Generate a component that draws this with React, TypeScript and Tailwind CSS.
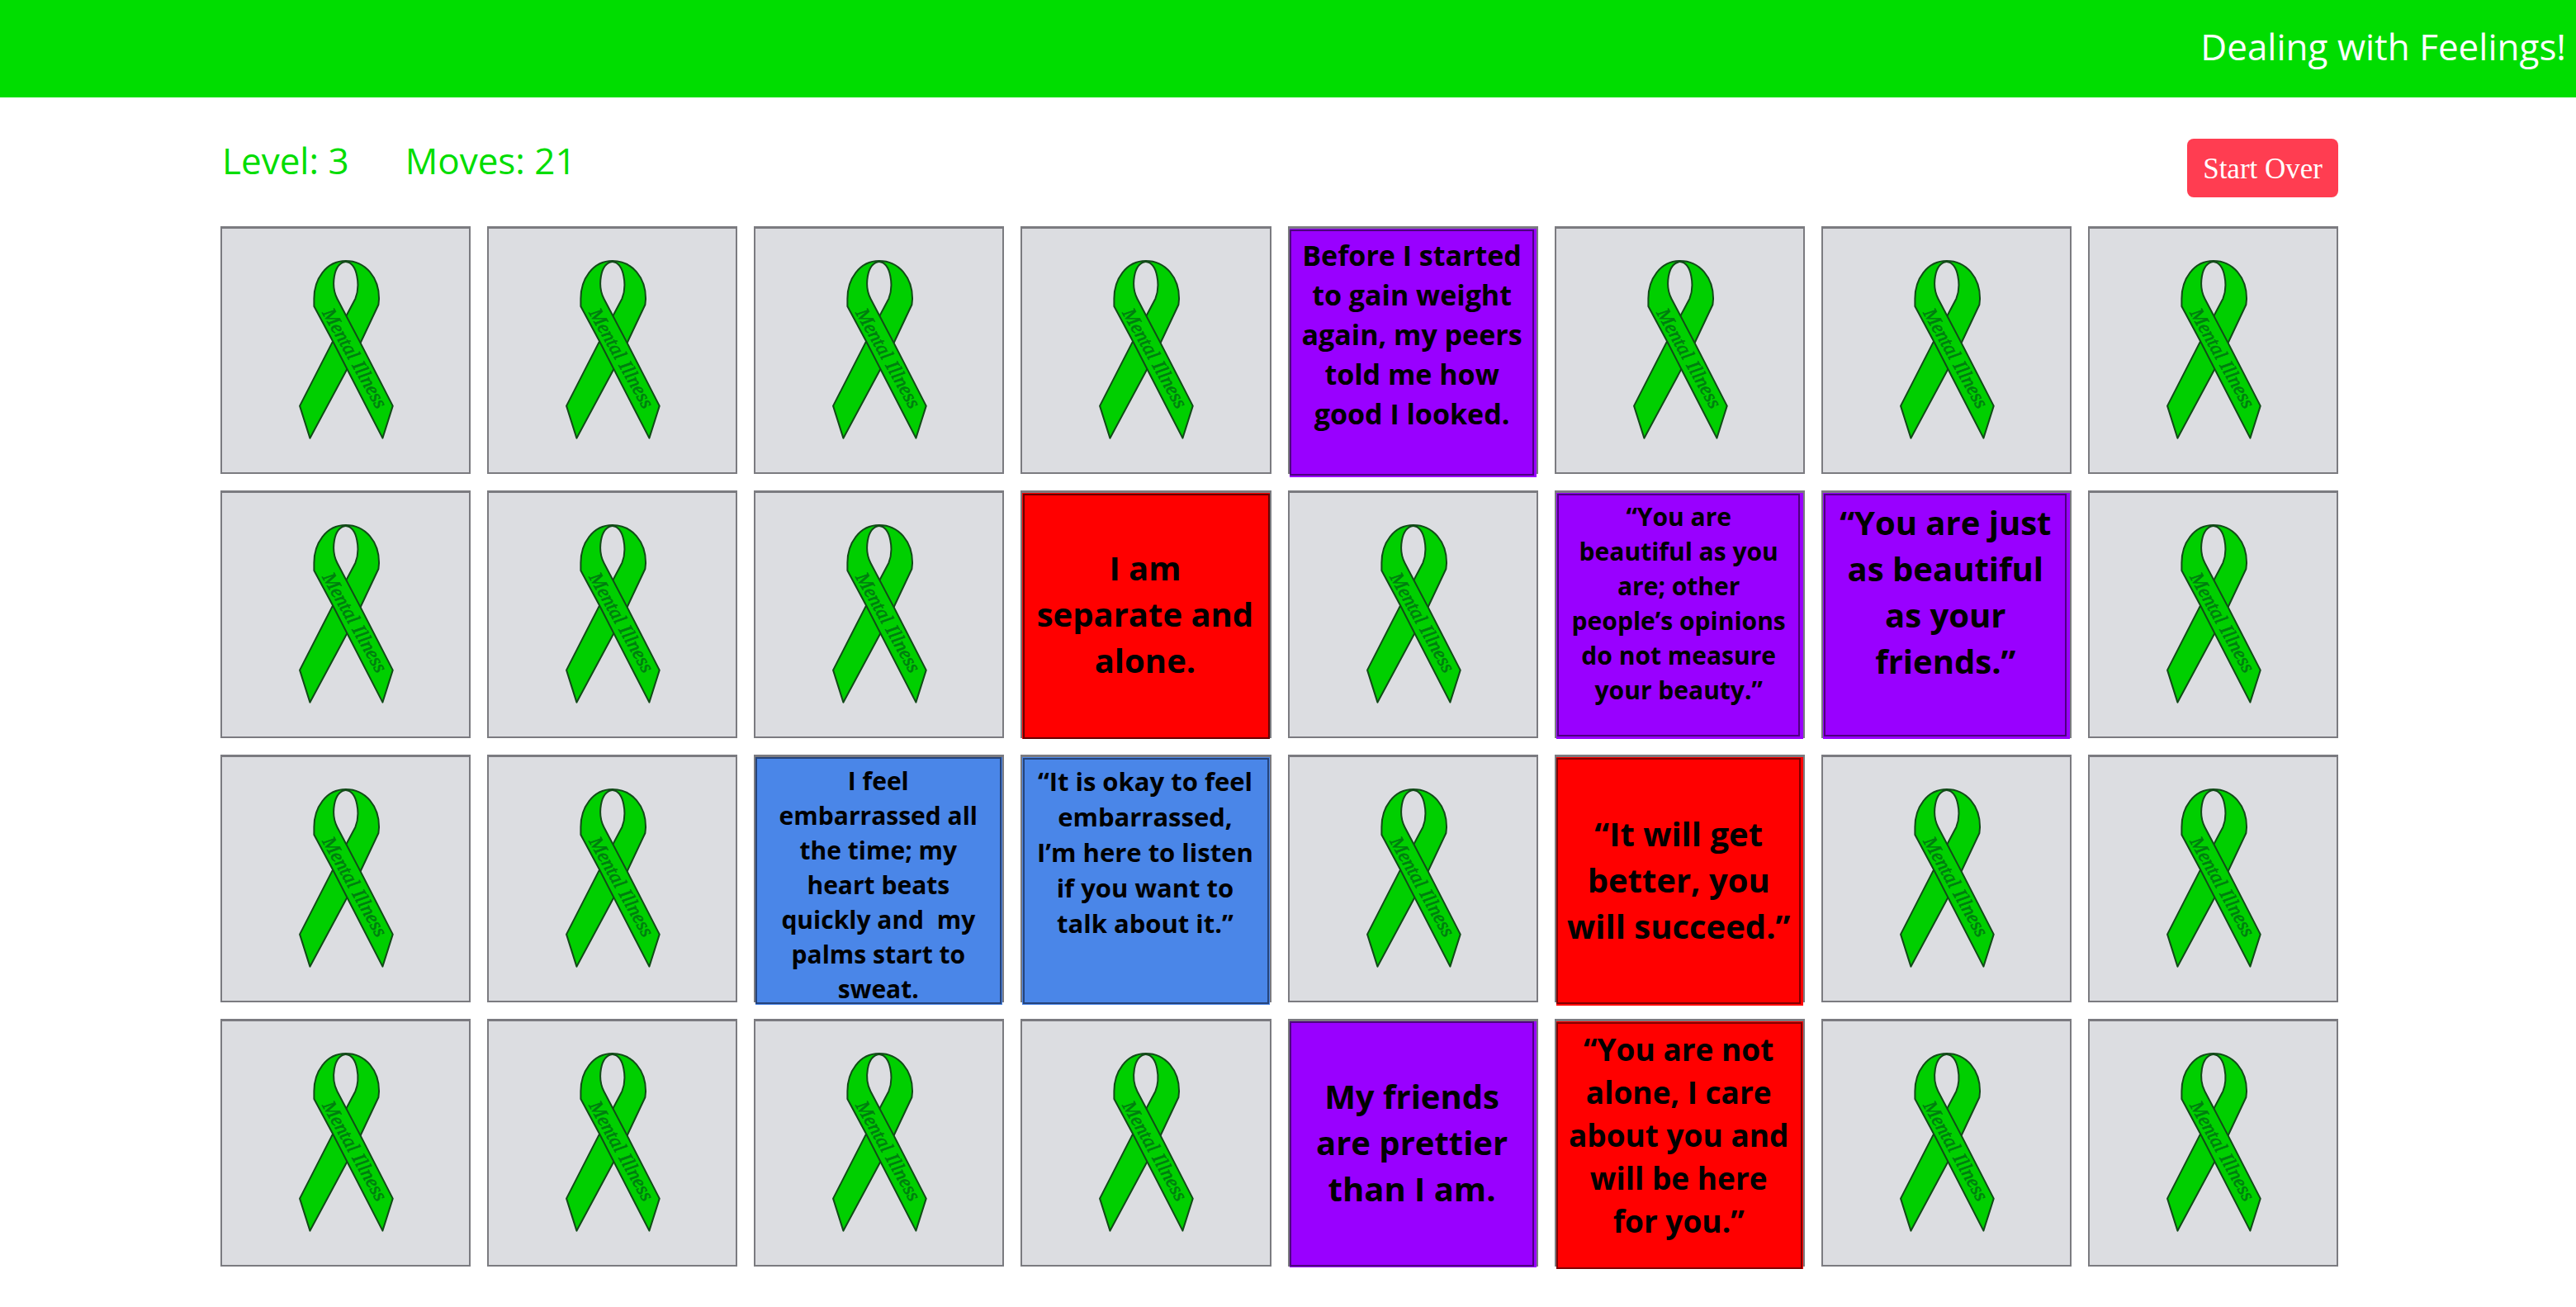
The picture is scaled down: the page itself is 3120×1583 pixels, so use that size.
type CardData = {
  text: string;
  face: string;
  frame: string;
};

const PURPLE_TOP = 'bg-[#9900ff] items-start';
const PURPLE_MID = 'bg-[#9900ff] items-center';
const RED_TOP = 'bg-[#ff0000] items-start';
const RED_MID = 'bg-[#ff0000] items-center';
const BLUE_TOP = 'bg-[#4a86e8] items-start';

const SIZE_XL = 'text-[40px] leading-[56px]';
const SIZE_L = 'text-[37px] leading-[52px]';
const SIZE_M = 'text-[34px] leading-[48px]';
const SIZE_S = 'text-[31px] leading-[43px]';
const SIZE_XS = 'text-[30px] leading-[42px]';

const revealed: Record<number, CardData> = {
  4: {
    text: 'Before I started\nto gain weight\nagain, my peers\ntold me how\ngood I looked.',
    face: `${PURPLE_TOP} ${SIZE_M} -mb-[6px]`,
    frame: 'left-0 top-px right-[3px] bottom-[2px] border-[#4d0080]',
  },
  11: {
    text: 'I am\nseparate and\nalone.',
    face: `${RED_MID} ${SIZE_XL} -mb-[3px]`,
    frame: 'left-px top-px right-0 bottom-0 border-[#660000]',
  },
  13: {
    text: '“You are\nbeautiful as you\nare; other\npeople’s opinions\ndo not measure\nyour beauty.”',
    face: `${PURPLE_TOP} ${SIZE_XS} -mb-[3px]`,
    frame: 'left-px top-px right-[4px] bottom-[3px] border-[#4d0080]',
  },
  14: {
    text: '“You are just\nas beautiful\nas your\nfriends.”',
    face: `${PURPLE_TOP} ${SIZE_XL} -mb-[3px]`,
    frame: 'left-px top-px right-[4px] bottom-[3px] border-[#4d0080]',
  },
  18: {
    text: 'I feel\nembarrassed all\nthe time; my\nheart beats\nquickly and  my\npalms start to\nsweat.',
    face: `${BLUE_TOP} ${SIZE_XS} -mb-[5px]`,
    frame: 'left-0 top-0 right-px bottom-px border-[#25437a]',
  },
  19: {
    text: '“It is okay to feel\nembarrassed,\nI’m here to listen\nif you want to\ntalk about it.”',
    face: `${BLUE_TOP} ${SIZE_S} -mb-[5px]`,
    frame: 'left-px top-px right-px bottom-px border-[#25437a]',
  },
  21: {
    text: '“It will get\nbetter, you\nwill succeed.”',
    face: `${RED_MID} ${SIZE_XL} -mb-[6px]`,
    frame: 'left-0 top-px right-[3px] bottom-[2px] border-[#800000]',
  },
  28: {
    text: 'My friends\nare prettier\nthan I am.',
    face: `${PURPLE_MID} ${SIZE_XL} -mb-[3px]`,
    frame: 'left-0 top-0 right-[3px] bottom-px border-[#4d0080]',
  },
  29: {
    text: '“You are not\nalone, I care\nabout you and\nwill be here\nfor you.”',
    face: `${RED_TOP} ${SIZE_L} -mb-[5px]`,
    frame: 'left-0 top-px right-px bottom-0 border-[#800000]',
  },
};

function Ribbon() {
  return (
    <svg viewBox="43 36 897 885" className="h-full w-full" aria-hidden="true">
      <g fill="#00cf00" stroke="#124a18" strokeWidth="6" strokeLinejoin="round">
        <path d="M492 153 C565 153 613 215 613 290 L611 312 L546 450 L495 550 L362 797 L325 680 L445 445 L527 290 C545 245 536 160 492 156 Z" />
        <path d="M492 153 C420 153 377 220 377 290 L377 318 L445 445 L626 797 L663 680 L546 452 L461 290 C438 245 446 162 492 156 Z" />
      </g>
      <text
        transform="translate(406 342) rotate(60.5)"
        fontSize="71"
        fontStyle="italic"
        fontFamily="'Liberation Serif', serif"
        fill="#007d10"
        stroke="#007d10"
        strokeWidth="2"
      >
        Mental Illness
      </text>
    </svg>
  );
}

function Card({ data, index }: { data?: CardData; index: number }) {
  return (
    <button
      type="button"
      aria-label={data ? undefined : `Hidden card ${index + 1}`}
      className="flex h-[300px] border-2 border-t-[3px] border-[#7b7b80] bg-[#dcdde1]"
    >
      {data ? (
        <span
          className={`relative flex flex-1 justify-center self-stretch pt-2 pr-0.5 pb-3 text-center font-bold whitespace-pre text-black ${data.face}`}
        >
          <span className={`absolute border-2 ${data.frame}`} />
          <span>{data.text}</span>
        </span>
      ) : (
        <Ribbon />
      )}
    </button>
  );
}

export default function App() {
  return (
    <div className="min-h-screen bg-white font-['Open_Sans',sans-serif]">
      <header className="flex h-[118px] items-center justify-end bg-[#00dd00] pr-3 pb-1.5 text-white">
        <h1 className="text-[44px] leading-[56px]">Dealing with Feelings!</h1>
      </header>
      <main className="pt-[50px] pr-[288px] pl-[267px]">
        <div className="mb-[35px] flex items-start justify-between">
          <div className="-mt-0.5 flex gap-[68px] pl-0.5 text-[44px] leading-[56px] text-[#00dd00]">
            <p>Level: 3</p>
            <p>Moves: 21</p>
          </div>
          <button
            type="button"
            className="rounded-lg bg-[#ff3d51] px-[19px] pt-[15px] pb-[13px] font-['Liberation_Serif',serif] text-[35px] leading-[43px] text-white"
          >
            Start Over
          </button>
        </div>
        <div className="grid grid-cols-8 gap-5">
          {Array.from({ length: 32 }, (_, i) => (
            <Card key={i} index={i} data={revealed[i]} />
          ))}
        </div>
      </main>
    </div>
  );
}
